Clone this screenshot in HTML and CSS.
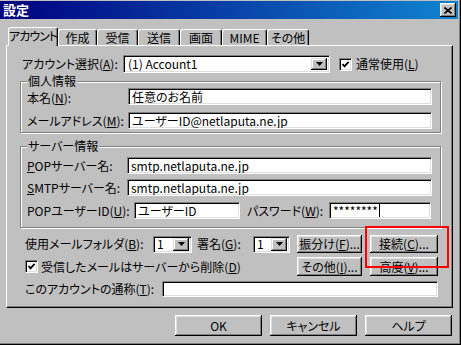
FILE: index.html
```html
<!DOCTYPE html>
<html lang="ja">
<head>
  <meta charset="UTF-8">
  <title>設定</title>
  <link rel="stylesheet" href="styles.css">
</head>
<body>
  <div class="window">
    <div class="titlebar">
      <span class="title">設定</span>
      <span class="close-btn">
        <svg width="8" height="7" viewBox="0 0 8 7"><path d="M0.5 0.5 L7.5 6.5 M7.5 0.5 L0.5 6.5" stroke="#000" stroke-width="1.6"/></svg>
      </span>
    </div>

    <div class="tabs">
      <div class="tab active tab-account">アカウント</div>
      <div class="tab tab-w39">作成</div>
      <div class="tab tab-w41">受信</div>
      <div class="tab tab-w42">送信</div>
      <div class="tab tab-w42">画面</div>
      <div class="tab tab-w45">MIME</div>
      <div class="tab tab-w42">その他</div>
    </div>

    <div class="panel">
      <div class="row-account">
        <span class="label account-label">アカウント選択(<u>A</u>):</span>
        <div class="combo account-combo">
          <span class="combo-text">(1) Account1</span>
          <span class="combo-arrow"><svg width="7" height="4" viewBox="0 0 7 4"><polygon points="0,0 7,0 3.5,4" fill="#000"/></svg></span>
        </div>
        <span class="checkbox"><svg width="9" height="9" viewBox="0 0 9 9"><path d="M1.5 4 L3.5 6.3 L7.6 1.8" stroke="#000" stroke-width="1.8" fill="none"/></svg></span>
        <span class="check-label">通常使用(<u>L</u>)</span>
      </div>

      <fieldset class="group group-personal">
        <legend>個人情報</legend>
        <div class="field-row first-row">
          <span class="label w101">本名(<u>N</u>):</span>
          <div class="input w304">任意のお名前</div>
        </div>
        <div class="field-row gap7">
          <span class="label w101">メールアドレス(<u>M</u>):</span>
          <div class="input w304">ユーザーID@netlaputa.ne.jp</div>
        </div>
      </fieldset>

      <fieldset class="group group-server">
        <legend>サーバー情報</legend>
        <div class="field-row">
          <span class="label w100"><u>P</u>OPサーバー名:</span>
          <div class="input w305">smtp.netlaputa.ne.jp</div>
        </div>
        <div class="field-row gap5">
          <span class="label w100"><u>S</u>MTPサーバー名:</span>
          <div class="input w305">smtp.netlaputa.ne.jp</div>
        </div>
        <div class="field-row gap6">
          <span class="label w107">POPユーザーID(<u>U</u>):</span>
          <div class="input w106">ユーザーID</div>
          <span class="label pass-label">パスワード(<u>W</u>):</span>
          <div class="input w102">********<span class="caret"></span></div>
        </div>
      </fieldset>

      <div class="option-row folder-row">
        <span class="label w128">使用メールフォルダ(<u>B</u>):</span>
        <div class="combo small-combo w39">
          <span class="combo-text">1</span>
          <span class="combo-arrow"><svg width="7" height="4" viewBox="0 0 7 4"><polygon points="0,0 7,0 3.5,4" fill="#000"/></svg></span>
        </div>
        <span class="label sign-label">署名(<u>G</u>):</span>
        <div class="combo small-combo w37">
          <span class="combo-text">1</span>
          <span class="combo-arrow"><svg width="7" height="4" viewBox="0 0 7 4"><polygon points="0,0 7,0 3.5,4" fill="#000"/></svg></span>
        </div>
        <div class="btn-pair">
          <span class="btn w65">振分け(<u>F</u>)...</span>
          <span class="btn w68">接続(<u>C</u>)...</span>
        </div>
      </div>

      <div class="option-row delete-row">
        <span class="checkbox"><svg width="9" height="9" viewBox="0 0 9 9"><path d="M1.5 4 L3.5 6.3 L7.6 1.8" stroke="#000" stroke-width="1.8" fill="none"/></svg></span>
        <span class="check-label">受信したメールはサーバーから削除(<u>D</u>)</span>
        <div class="btn-pair">
          <span class="btn w65">その他(<u>I</u>)...</span>
          <span class="btn w68">高度(<u>V</u>)...</span>
        </div>
      </div>

      <div class="option-row alias-row">
        <span class="label w137">このアカウントの通称(<u>T</u>):</span>
        <div class="input w276"></div>
      </div>
    </div>

    <div class="actions">
      <span class="btn dialog-btn">OK</span>
      <span class="btn dialog-btn">キャンセル</span>
      <span class="btn dialog-btn">ヘルプ</span>
    </div>

    <div class="highlight"></div>
  </div>
</body>
</html>
```

FILE: styles.css
```css
* {
  box-sizing: border-box;
}
body {
  margin: 0;
  background: #c0c0c0;
  font-family: "Noto Sans CJK JP", "Liberation Sans", sans-serif;
  font-size: 12px;
  line-height: 14px;
  color: #000;
  font-feature-settings: "palt";
}
u {
  text-decoration-thickness: 1px;
  text-underline-offset: 1px;
}
.window {
  position: relative;
  width: 461px;
  height: 345px;
  background: #c0c0c0;
  padding: 1px 3px 0 0;
  box-shadow: inset -1px -1px #000, inset -2px -2px #808080;
  overflow: hidden;
}
.titlebar {
  height: 18px;
  display: flex;
  align-items: center;
  justify-content: space-between;
  padding: 0 2px 0 3px;
  background: linear-gradient(to right, #000080, #1084d0);
  color: #fff;
  font-weight: bold;
  font-size: 13px;
}
.close-btn {
  width: 16px;
  height: 14px;
  display: flex;
  align-items: center;
  justify-content: center;
  background: #c0c0c0;
  box-shadow: inset -1px -1px #000, inset 1px 1px #fff, inset -2px -2px #808080, inset 2px 2px #dfdfdf;
}

/* tabs */
.tabs {
  display: flex;
  align-items: flex-end;
  height: 18px;
  margin: 8px 0 0 8px;
  position: relative;
  z-index: 1;
}
.tab {
  height: 16px;
  display: flex;
  align-items: center;
  justify-content: center;
  white-space: nowrap;
  background: #c0c0c0;
  border-top: 1px solid #fff;
  border-left: 1px solid #fff;
  border-right: 1px solid #000;
  border-radius: 3px 3px 0 0;
  box-shadow: inset -1px 0 #808080;
}
.tab.active {
  height: 19px;
  margin-bottom: -1px;
  padding-bottom: 2px;
}
.tab-account {
  width: 50px;
  letter-spacing: -1px;
}
.tab-w39 { width: 39px; }
.tab-w41 { width: 41px; }
.tab-w42 { width: 42px; }
.tab-w45 { width: 45px; }

.panel {
  margin-left: 6px;
  width: 447px;
  height: 263px;
  border-top: 1px solid #fff;
  border-left: 1px solid #fff;
  border-right: 1px solid #000;
  border-bottom: 1px solid #000;
  box-shadow: inset -1px -1px #808080;
  padding-top: 9px;
}

/* common controls */
.label {
  flex: none;
  white-space: nowrap;
}
.input {
  flex: none;
  height: 17px;
  display: flex;
  align-items: center;
  padding: 0 3px;
  background: #fff;
  border: 1px solid;
  border-color: #808080 #fff #fff #808080;
  box-shadow: inset 1px 1px #000, inset -1px -1px #dfdfdf;
  white-space: nowrap;
  overflow: hidden;
}
.caret {
  display: inline-block;
  width: 1px;
  height: 13px;
  background: #000;
  margin-left: 1px;
}
.combo {
  flex: none;
  display: flex;
  align-items: center;
  justify-content: space-between;
  padding: 2px 2px 2px 4px;
  background: #fff;
  border: 1px solid;
  border-color: #808080 #fff #fff #808080;
  box-shadow: inset 1px 1px #000, inset -1px -1px #dfdfdf;
}
.combo-arrow {
  width: 16px;
  height: 100%;
  display: flex;
  align-items: center;
  justify-content: center;
  background: #c0c0c0;
  box-shadow: inset -1px -1px #000, inset 1px 1px #dfdfdf, inset -2px -2px #808080, inset 2px 2px #fff;
}
.checkbox {
  flex: none;
  width: 13px;
  height: 13px;
  display: flex;
  align-items: center;
  justify-content: center;
  background: #fff;
  border: 1px solid;
  border-color: #808080 #fff #fff #808080;
  box-shadow: inset 1px 1px #000, inset -1px -1px #dfdfdf;
}
.btn {
  flex: none;
  display: flex;
  align-items: center;
  justify-content: center;
  background: #c0c0c0;
  white-space: nowrap;
  box-shadow: inset -1px -1px #000, inset 1px 1px #fff, inset -2px -2px #808080, inset 2px 2px #dfdfdf;
}

/* account row */
.row-account {
  display: flex;
  align-items: center;
  height: 18px;
  padding-left: 15px;
}
.account-label { width: 101px; }
.account-combo {
  width: 207px;
  height: 18px;
}
.row-account .checkbox { margin-left: 9px; }
.check-label {
  margin-left: 4px;
  white-space: nowrap;
}

/* group boxes */
.group {
  width: 421px;
  margin: 2px 0 0 13px;
  padding: 0 0 3px 6px;
  border: 1px solid #808080;
  box-shadow: inset 1px 1px #fff, 1px 1px #fff;
  min-width: 0;
}
.group legend {
  padding: 0 1px;
  line-height: 12px;
  background: #c0c0c0;
}
.group-server {
  margin-top: 7px;
  padding-top: 5px;
  padding-bottom: 8px;
}
.field-row {
  display: flex;
  align-items: center;
  height: 17px;
}
.first-row {
  margin-top: 1px;
}
.first-row .label {
  align-self: flex-end;
}
.gap5 { margin-top: 5px; }
.gap6 { margin-top: 6px; }
.gap7 { margin-top: 7px; }
.w100 { width: 100px; }
.w101 { width: 101px; }
.w102 { width: 102px; }
.w106 { width: 106px; }
.w107 { width: 107px; }
.w128 { width: 128px; }
.w137 { width: 137px; }
.w276 { width: 276px; }
.w304 { width: 304px; }
.w305 { width: 305px; }
.w37 { width: 37px; }
.w39 { width: 39px; }
.w65 { width: 65px; }
.w68 { width: 68px; }
.pass-label {
  width: 82px;
  margin-left: 7px;
}

/* bottom options */
.option-row {
  display: flex;
  align-items: center;
  padding: 0 14px 0 18px;
}
.folder-row {
  height: 18px;
  margin-top: 7px;
}
.small-combo {
  height: 17px;
  padding: 1px 2px 1px 3px;
}
.sign-label {
  width: 56px;
  margin-left: 5px;
}
.btn-pair {
  display: flex;
  gap: 8px;
  margin-left: auto;
  height: 100%;
}
.delete-row {
  height: 19px;
  margin-top: 4px;
}
.delete-row .check-label {
  margin-left: 3px;
}
.alias-row {
  height: 16px;
  margin-top: 5px;
}
.alias-row .input {
  height: 16px;
}

/* dialog buttons */
.actions {
  display: flex;
  justify-content: flex-end;
  gap: 8px;
  height: 21px;
  margin-top: 7px;
  padding-right: 6px;
}
.dialog-btn {
  width: 87px;
}

.highlight {
  position: absolute;
  left: 365px;
  top: 226px;
  width: 84px;
  height: 42px;
  border: 2px solid #f00;
}
```
